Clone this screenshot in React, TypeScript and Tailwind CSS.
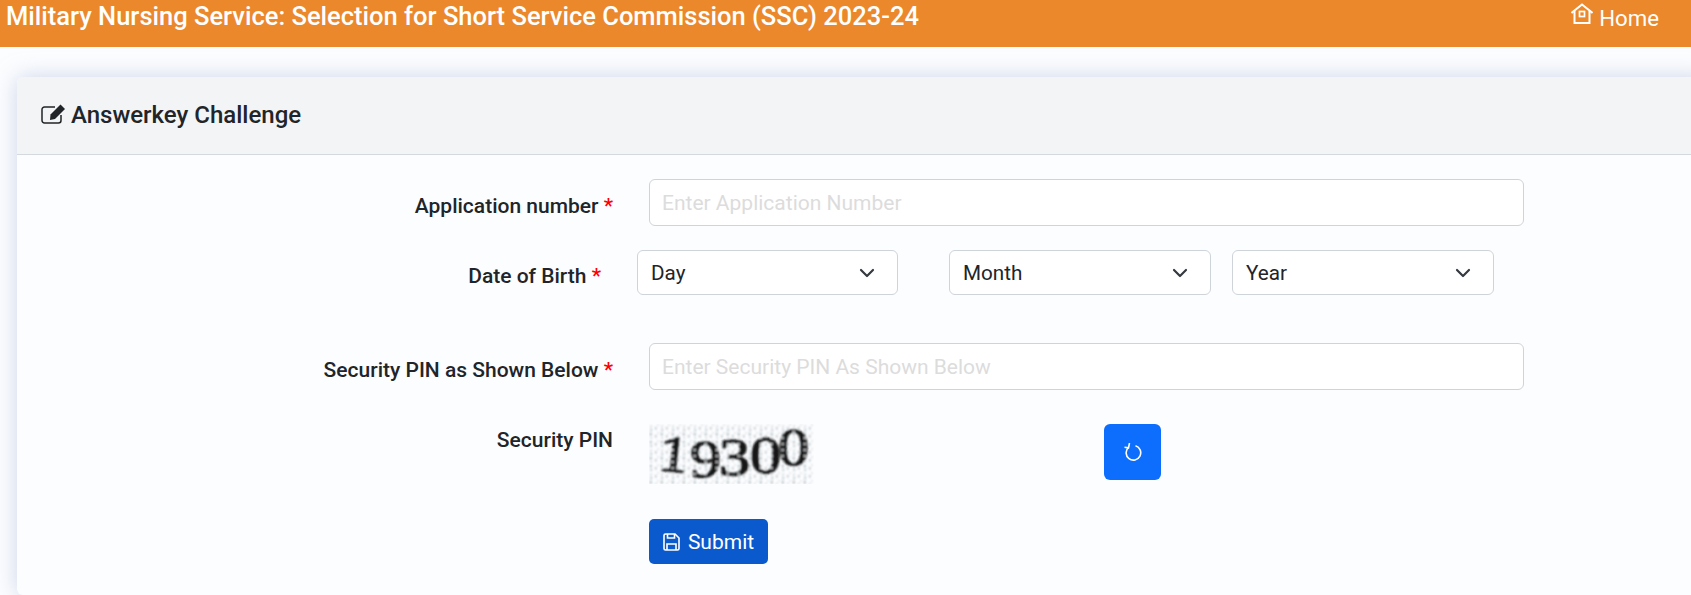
import React from "react";
import {ChevronDown} from "lucide-react";

const Star = () => <span className="text-[#ff0000]"> *</span>;

function DobSelect({label, className}: {label: string; className: string}) {
    return (
        <div className={`flex h-[45px] items-center justify-between rounded-[6px] border border-[#ced4da] bg-white pl-[13px] pr-[18px] text-[20.7px] text-[#212529] ${className}`}>
            <span className="pt-[2px]">{label}</span>
            <ChevronDown className="h-[24px] w-[24px] text-[#343a40]" strokeWidth={2.2} />
        </div>
    );
}

function Captcha() {
    return (
        <svg width="165" height="60" viewBox="0 0 165 60" className="block">
            <defs>
                <pattern id="noise" width="11" height="8" patternUnits="userSpaceOnUse">
                    <rect x="1" y="1" width="1.5" height="2.5" fill="#98a4a9" />
                    <rect x="1.5" y="5" width="1.5" height="2" fill="#aeb8bc" />
                    <rect x="6" y="3" width="1.5" height="2.5" fill="#b4bdc1" />
                    <rect x="8.5" y="0" width="1" height="2" fill="#c9d0d3" />
                </pattern>
                <pattern id="holes" width="11" height="6" patternUnits="userSpaceOnUse">
                    <rect x="1" y="1" width="1.5" height="2" fill="#e8ecee" />
                </pattern>
                <filter id="soft">
                    <feGaussianBlur stdDeviation="0.8" />
                </filter>
            </defs>
            <rect width="165" height="60" fill="#fcfdff" />
            <g filter="url(#soft)">
                <rect width="165" height="60" fill="url(#noise)" />
                <g fontFamily="'Liberation Serif', serif" fill="#141618" stroke="#141618" strokeWidth="1.4" fontSize="52">
                    <text transform="translate(8 46) rotate(6) scale(1.15 1)">1</text>
                    <text transform="translate(41 53) scale(1.2 1)">9</text>
                    <text transform="translate(70 51) scale(1.2 1)">3</text>
                    <text transform="translate(101 49) scale(1.2 1)">0</text>
                    <text transform="translate(129 41) scale(1.2 1)">0</text>
                </g>
                <rect width="165" height="60" fill="url(#holes)" />
            </g>
        </svg>
    );
}

export default function App() {
    return (
        <div className="min-h-[595px] overflow-hidden bg-[#fcfdff] font-['Roboto',sans-serif] text-[#212529]">
            <div className="flex h-[47px] items-start justify-between bg-[#eb882b] pl-[6px] pr-[32px] text-white">
                <div className="text-[25.5px] font-medium leading-[32px]">
                    Military Nursing Service: Selection for Short Service Commission (SSC) 2023-24
                </div>
                <div className="flex items-center gap-[6px] pt-[3px] text-[22.2px] leading-[30px]">
                    <svg width="22" height="21" viewBox="0 0 22 21" fill="none" stroke="currentColor" strokeWidth="2" className="-mt-[9px]">
                        <path d="M0.5 10 11 1.5 21.5 10" />
                        <path d="M3.5 8V20h15V8" />
                        <rect x="8.5" y="8.5" width="5" height="5" strokeWidth="1.7" />
                    </svg>
                    <span>Home</span>
                </div>
            </div>

            <div className="ml-[17px] mr-[-20px] mt-[30px] rounded-[6px] bg-[#fcfdff] pb-[31px] shadow-[0_0_22px_rgba(160,175,210,0.5)]">
                <div className="flex h-[78px] items-center gap-[5px] rounded-t-[6px] border-b border-[#d5d8de] bg-[#f3f4f6] pb-[2px] pl-[24px] text-[24px] font-medium">
                    <svg width="25" height="20" viewBox="0 0 25 20" fill="none" stroke="#212529" strokeWidth="1.5" className="mt-[-2px]">
                        <path d="M20 11v5.5a2.5 2.5 0 0 1-2.5 2.5H3.500A2.500 2.500 0 0 1 1 16.500V5.500A2.500 2.500 0 0 1 3.500 3H14" />
                        <path d="M9.500 10.500 19.500 0.500 24 5 14 15 9 16z" fill="#212529" stroke="none" />
                    </svg>
                    <span>Answerkey Challenge</span>
                </div>

                <div className="flex pt-[24px]">
                    <div className="w-[596px] pt-[14px] text-right text-[21px] font-medium leading-[26px]">
                        Application number<Star />
                    </div>
                    <input
                        className="ml-[36px] h-[47px] w-[875px] rounded-[6px] border border-[#ced4da] bg-white px-[12px] text-[21px] outline-none placeholder:text-[#dcdcdc]"
                        placeholder="Enter Application Number"
                    />
                </div>

                <div className="mt-[24px] flex">
                    <div className="w-[584px] pt-[13px] text-right text-[21px] font-medium leading-[26px]">
                        Date of Birth<Star />
                    </div>
                    <DobSelect label="Day" className="ml-[36px] w-[261px]" />
                    <DobSelect label="Month" className="ml-[51px] w-[262px]" />
                    <DobSelect label="Year" className="ml-[21px] w-[262px]" />
                </div>

                <div className="mt-[48px] flex">
                    <div className="w-[596px] pt-[14px] text-right text-[21px] font-medium leading-[26px]">
                        Security PIN as Shown Below<Star />
                    </div>
                    <input
                        className="ml-[36px] h-[47px] w-[875px] rounded-[6px] border border-[#ced4da] bg-white px-[12px] text-[21px] outline-none placeholder:text-[#dcdcdc]"
                        placeholder="Enter Security PIN As Shown Below"
                    />
                </div>

                <div className="mt-[34px] flex items-start">
                    <div className="w-[596px] pt-[3px] text-right text-[21px] font-medium leading-[26px]">
                        Security PIN
                    </div>
                    <div className="ml-[36px]">
                        <Captcha />
                    </div>
                    <button className="ml-[290px] flex h-[56px] w-[57px] items-center justify-center rounded-[6px] bg-[#0d6efd] text-white" aria-label="Refresh">
                        <svg width="18" height="18" viewBox="0 0 18 18" fill="none" stroke="currentColor" strokeWidth="1.6">
                            <path d="M11.500 2.800A7.300 7.300 0 1 1 4.500 4.400" />
                            <path d="M5.500 0 4.500 4.800 0.500 4.200" />
                        </svg>
                    </button>
                </div>

                <div className="ml-[632px] mt-[35px]">
                    <button className="flex h-[45px] w-[119px] items-center justify-center gap-[8px] rounded-[5px] bg-[#0b5acd] pt-[2px] text-[21px] text-white">
                        <svg width="17" height="18" viewBox="0 0 17 18" fill="none" stroke="currentColor" strokeWidth="1.6" className="-mt-[2px]">
                            <path d="M1 2.500A1.500 1.500 0 0 1 2.500 1H12l4 4v10.500A1.500 1.500 0 0 1 14.500 17h-12A1.500 1.500 0 0 1 1 15.500z" />
                            <path d="M4.500 1v4h7V1" />
                            <path d="M4 17v-6h9v6" />
                        </svg>
                        Submit
                    </button>
                </div>
            </div>
        </div>
    );
}
